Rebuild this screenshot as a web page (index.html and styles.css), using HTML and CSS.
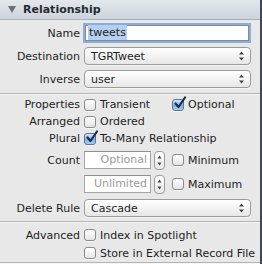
FILE: index.html
```html
<!DOCTYPE html>
<html lang="en">
<head>
    <meta charset="UTF-8">
    <link rel="stylesheet" href="styles.css">
    <title>Relationship</title>
</head>
<body>
    <div class="inspector">
        <div class="header">
            <span class="disclosure"></span>
            <span class="title">Relationship</span>
        </div>

        <div class="section top">
            <div class="row tall">
                <label class="label">Name</label>
                <div class="textfield"><span class="selected">tweets</span></div>
            </div>
            <div class="row tall">
                <label class="label">Destination</label>
                <div class="popup">TGRTweet<svg class="arrows" width="7" height="10" viewBox="0 0 7 10"><path d="M3.5 0.5 L6 3.5 L1 3.5 Z M3.5 9.5 L6 6.5 L1 6.5 Z" fill="#444"/></svg></div>
            </div>
            <div class="row tall">
                <label class="label">Inverse</label>
                <div class="popup">user<svg class="arrows" width="7" height="10" viewBox="0 0 7 10"><path d="M3.5 0.5 L6 3.5 L1 3.5 Z M3.5 9.5 L6 6.5 L1 6.5 Z" fill="#444"/></svg></div>
            </div>
        </div>

        <div class="separator"></div>

        <div class="section middle">
            <div class="row">
                <label class="label">Properties</label>
                <div class="pair">
                    <span class="check"><span class="box"></span>Transient</span>
                    <span class="check"><span class="box on"><svg class="tick" width="14" height="14" viewBox="0 0 14 14"><path d="M2.5 7.5 L5.5 11 L12 1.5" fill="none" stroke="#1d2b45" stroke-width="2.2" stroke-linecap="round" stroke-linejoin="round"/></svg></span>Optional</span>
                </div>
            </div>
            <div class="row">
                <label class="label">Arranged</label>
                <span class="check"><span class="box"></span>Ordered</span>
            </div>
            <div class="row">
                <label class="label">Plural</label>
                <span class="check"><span class="box on"><svg class="tick" width="14" height="14" viewBox="0 0 14 14"><path d="M2.5 7.5 L5.5 11 L12 1.5" fill="none" stroke="#1d2b45" stroke-width="2.2" stroke-linecap="round" stroke-linejoin="round"/></svg></span>To-Many Relationship</span>
            </div>
            <div class="row tall count first">
                <label class="label">Count</label>
                <div class="pair">
                    <div class="numfield">
                        <div class="number">Optional</div>
                        <div class="stepper"><svg width="5" height="11" viewBox="0 0 5 11"><path d="M2.5 0.5 L4.5 3.5 L0.5 3.5 Z M2.5 10.5 L4.5 7.5 L0.5 7.5 Z" fill="#444"/></svg></div>
                    </div>
                    <span class="check"><span class="box"></span>Minimum</span>
                </div>
            </div>
            <div class="row tall count">
                <label class="label"></label>
                <div class="pair">
                    <div class="numfield">
                        <div class="number">Unlimited</div>
                        <div class="stepper"><svg width="5" height="11" viewBox="0 0 5 11"><path d="M2.5 0.5 L4.5 3.5 L0.5 3.5 Z M2.5 10.5 L4.5 7.5 L0.5 7.5 Z" fill="#444"/></svg></div>
                    </div>
                    <span class="check"><span class="box"></span>Maximum</span>
                </div>
            </div>
            <div class="row tall count">
                <label class="label">Delete Rule</label>
                <div class="popup">Cascade<svg class="arrows" width="7" height="10" viewBox="0 0 7 10"><path d="M3.5 0.5 L6 3.5 L1 3.5 Z M3.5 9.5 L6 6.5 L1 6.5 Z" fill="#444"/></svg></div>
            </div>
        </div>

        <div class="separator"></div>

        <div class="section bottom">
            <div class="row">
                <label class="label">Advanced</label>
                <span class="check"><span class="box"></span>Index in Spotlight</span>
            </div>
            <div class="row">
                <label class="label"></label>
                <span class="check"><span class="box"></span>Store in External Record File</span>
            </div>
        </div>
        <div class="separator"></div>
    </div>
</body>
</html>
```

FILE: styles.css
```css
html, body{
    margin: 0;
    padding: 0;
    background: #e8e8e8;
}
body{
    font-family: 'DejaVu Sans', 'Liberation Sans', sans-serif;
    font-size: 11px;
    color: #1e1e1e;
}
.inspector{
    width: 260px;
    height: 264px;
    border-right: 2px solid #3b4858;
    background: #e8e8e8;
    display: flex;
    flex-direction: column;
    overflow: hidden;
}
.header{
    flex: none;
    height: 19px;
    border-bottom: 1px solid #a9b0b8;
    background: linear-gradient(#e4e8ed, #cdd3db);
    display: flex;
    align-items: center;
    gap: 7px;
    padding-left: 8px;
}
.disclosure{
    width: 0;
    height: 0;
    border-left: 4px solid transparent;
    border-right: 4px solid transparent;
    border-top: 7px solid #6b6f75;
}
.title{
    font-weight: bold;
    color: #262a30;
}
.section{
    flex: none;
    display: flex;
    flex-direction: column;
    padding-right: 9px;
}
.section.top{
    padding-top: 3px;
    padding-bottom: 4px;
    gap: 3px;
}
.section.middle{
    padding-top: 1px;
    padding-bottom: 3px;
}
.section.bottom{
    padding-top: 3px;
}
.row{
    display: grid;
    grid-template-columns: 80px 1fr;
    column-gap: 4px;
    align-items: center;
    height: 17px;
    white-space: nowrap;
}
.section.bottom .row{
    height: 18px;
}
.row.tall{
    height: 20px;
}
.row.count{
    margin-top: 4px;
}
.row.count.first{
    margin-top: 3px;
}
.label{
    text-align: right;
}
.textfield{
    height: 14px;
    line-height: 14px;
    background: #fff;
    border: 1px solid #8a8a8a;
    box-shadow: 0 0 0 2px #86aee0;
    margin: 0 2px 0 1px;
    padding-left: 2px;
}
.selected{
    background: #b5cff0;
    padding: 1px 1px;
}
.popup{
    height: 16px;
    border: 1px solid #9c9c9c;
    border-radius: 4px;
    background: linear-gradient(#ffffff, #f1f1f1 60%, #e6e6e6);
    display: flex;
    align-items: center;
    justify-content: space-between;
    padding: 0 5px 0 6px;
    box-shadow: 0 1px 0 rgba(255,255,255,0.6);
}
.pair{
    display: flex;
    align-items: center;
}
.pair .check:first-child{
    width: 88px;
}
.check{
    display: flex;
    align-items: center;
    gap: 4px;
}
.box{
    flex: none;
    position: relative;
    width: 10px;
    height: 10px;
    border: 1px solid #8c8c8c;
    border-radius: 3px;
    background: linear-gradient(#ffffff, #e4e4e4);
    box-shadow: 0 1px 0 rgba(255,255,255,0.7);
}
.box.on{
    border-color: #5d7593;
    background: linear-gradient(#d4e6fa, #7fb2ea 55%, #a9cdf2);
}
.tick{
    position: absolute;
    left: 0;
    top: -4px;
}
.numfield{
    display: flex;
    align-items: center;
    gap: 3px;
    width: 88px;
}
.number{
    width: 62px;
    height: 16px;
    line-height: 16px;
    background: #fff;
    border: 1px solid #a5a5a5;
    border-top-color: #8e8e8e;
    text-align: right;
    padding-right: 3px;
    color: #9a9a9a;
}
.stepper{
    width: 9px;
    height: 17px;
    border: 1px solid #9c9c9c;
    border-radius: 4px;
    background: linear-gradient(#fff, #e8e8e8);
    display: flex;
    align-items: center;
    justify-content: center;
}
.separator{
    flex: none;
    height: 1px;
    background: #b4b4b4;
    border-bottom: 1px solid #f6f6f6;
}
```
